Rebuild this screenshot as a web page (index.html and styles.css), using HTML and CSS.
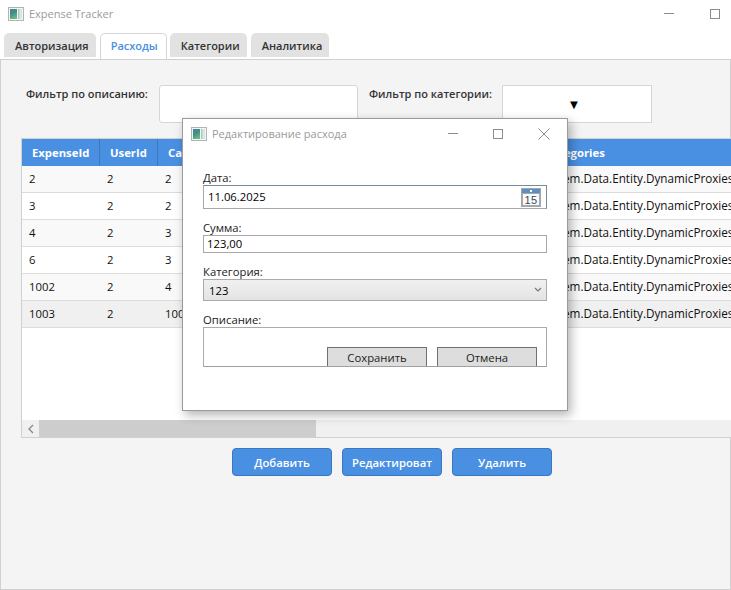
FILE: index.html
```html
<!DOCTYPE html>
<html lang="en">
<head>
    <meta charset="UTF-8">
    <title>Expense Tracker</title>
    <link rel="stylesheet" href="styles.css">
</head>
<body>
    <svg class="defs" width="0" height="0"><defs><linearGradient id="appfill" x1="0" y1="0" x2="0.4" y2="1"><stop offset="0" stop-color="#4f7f9f"/><stop offset="0.5" stop-color="#3f8f8a"/><stop offset="1" stop-color="#6fb57f"/></linearGradient></defs></svg>
    <div class="titlebar">
        <svg class="appicon" viewBox="0 0 16 16"><rect x="0.5" y="1.5" width="15" height="13" fill="#f4f6f6" stroke="#b0b4b4"/><rect x="2" y="3" width="7" height="10" fill="url(#appfill)"/><rect x="10" y="3" width="1.5" height="10" fill="#9ecbb8"/><rect x="12" y="3" width="2" height="10" fill="#dbe4e4"/></svg>
        <span class="titletext">Expense Tracker</span>
        <div class="controls">
            <span class="min"></span>
            <span class="max"></span>
        </div>
    </div>
    <div class="tabs">
        <div class="tab">Авторизация</div>
        <div class="tab active">Расходы</div>
        <div class="tab">Категории</div>
        <div class="tab">Аналитика</div>
    </div>
    <div class="panel">
        <div class="filters">
            <label class="flabel one">Фильтр по описанию:</label>
            <div class="finput"></div>
            <label class="flabel two">Фильтр по категории:</label>
            <div class="fcombo">▼</div>
        </div>
        <div class="grid">
            <table>
                <tr>
                    <th class="c1">ExpenseId</th><th class="c2">UserId</th><th class="c3">CategoryId</th><th>Categories</th>
                </tr>
                <tr><td>2</td><td>2</td><td>2</td><td>System.Data.Entity.DynamicProxies</td></tr>
                <tr><td>3</td><td>2</td><td>2</td><td>System.Data.Entity.DynamicProxies</td></tr>
                <tr><td>4</td><td>2</td><td>3</td><td>System.Data.Entity.DynamicProxies</td></tr>
                <tr><td>6</td><td>2</td><td>3</td><td>System.Data.Entity.DynamicProxies</td></tr>
                <tr><td>1002</td><td>2</td><td>4</td><td>System.Data.Entity.DynamicProxies</td></tr>
                <tr class="selected"><td>1003</td><td>2</td><td>1002</td><td>System.Data.Entity.DynamicProxies</td></tr>
            </table>
            <div class="hscroll">
                <div class="arrow"><svg width="8" height="10" viewBox="0 0 8 10"><path d="M6 1 L2 5 L6 9" fill="none" stroke="#8a8a8a" stroke-width="1.4"/></svg></div>
                <div class="thumb"></div>
            </div>
        </div>
        <div class="actions">
            <button>Добавить</button>
            <button>Редактироват</button>
            <button>Удалить</button>
        </div>
    </div>

    <div class="dialog">
        <div class="dtitle">
            <svg class="appicon" viewBox="0 0 16 16"><rect x="0.5" y="1.5" width="15" height="13" fill="#f4f6f6" stroke="#b0b4b4"/><rect x="2" y="3" width="7" height="10" fill="url(#appfill)"/><rect x="10" y="3" width="1.5" height="10" fill="#9ecbb8"/><rect x="12" y="3" width="2" height="10" fill="#dbe4e4"/></svg>
            <span class="titletext">Редактирование расхода</span>
            <div class="dcontrols">
                <span class="min"></span>
                <span class="max"></span>
                <svg width="12" height="12" viewBox="0 0 12 12"><path d="M0.5 0.5 L11.5 11.5 M11.5 0.5 L0.5 11.5" stroke="#8c8c8c" fill="none"/></svg>
            </div>
        </div>
        <div class="form">
            <label>Дата:</label>
            <div class="dateinput">
                <span>11.06.2025</span>
                <svg width="20" height="19" viewBox="0 0 20 19"><rect width="20" height="19" fill="#a4a8ac"/><rect x="1" y="1" width="18" height="4" fill="#5a8fc4"/><rect x="9" y="2" width="2" height="2" fill="#fff"/><rect x="2" y="6" width="16" height="11" fill="#fbfbfb"/><text x="10" y="15.5" font-size="11" letter-spacing="0.5" text-anchor="middle" fill="#3c4a50" font-family="Liberation Sans">15</text></svg>
            </div>
            <label>Сумма:</label>
            <div class="textinput">123,00</div>
            <label>Категория:</label>
            <div class="combo">
                <span>123</span>
                <svg width="8" height="6" viewBox="0 0 8 6"><path d="M1 1 L4 4 L7 1" fill="none" stroke="#777" stroke-width="1.2"/></svg>
            </div>
            <label>Описание:</label>
            <div class="descr">
                <button>Сохранить</button>
                <button>Отмена</button>
            </div>
        </div>
    </div>
</body>
</html>
```
FILE: styles.css
```css
* {
    margin: 0; padding: 0;
    box-sizing: border-box;
}
html, body {
    width: 731px;
    height: 590px;
    overflow: hidden;
}
body {
    background: #fff;
    color: #000;
    font-family: "Open Sans", "Noto Sans", sans-serif;
    font-size: 11.3px;
    position: relative;
}
.defs {
    position: absolute;
}

.titlebar {
    height: 33px;
    display: flex;
    align-items: center;
    padding: 0 11px 6px 8px;
}
.appicon {
    width: 16px;
    height: 16px;
    flex: none;
}
.titletext {
    margin-left: 5px;
    color: #9a9a9a;
    font-size: 11px;
}
.controls {
    margin-left: auto;
    display: flex;
    align-items: center;
    gap: 36px;
}
.min {
    display: block;
    width: 10px;
    height: 1px;
    background: #8c8c8c;
}
.max {
    display: block;
    width: 10px;
    height: 10px;
    border: 1px solid #8c8c8c;
}

.tabs {
    height: 26px;
    display: flex;
    align-items: flex-start;
    padding-left: 4px;
    gap: 4px;
}
.tab {
    height: 24px;
    padding: 0 7px 0 11px;
    display: flex;
    align-items: center;
    background: #e2e2e2;
    border-radius: 5px 5px 0 0;
    font-size: 11px;
    font-weight: 600;
    color: #333;
}
.tab.active {
    height: 26px;
    background: #fff;
    border: 1px solid #d6d6d6;
    border-bottom: 0;
    color: #4a90e2;
    padding: 0 8px 2px 10px;
    margin-right: -1px;
}

.panel {
    height: 531px;
    background: #f4f4f4;
    border: 1px solid #d0d0d0;
    padding: 25px 0 0 20px;
}
.filters {
    display: flex;
    align-items: flex-start;
    height: 53px;
}
.flabel {
    font-weight: 600;
    font-size: 11px;
    color: #333;
    line-height: 18px;
    white-space: nowrap;
}
.flabel.one { width: 124px; margin: 0 9px 0 5px; }
.flabel.two { width: 123px; margin: 0 10px 0 11px; }
.finput {
    width: 199px;
    height: 38px;
    background: #fff;
    border: 1px solid #d6d6d6;
    border-radius: 3px;
}
.fcombo {
    width: 150px;
    height: 38px;
    background: #fff;
    border: 1px solid #d6d6d6;
    text-align: center;
    line-height: 36px;
    font-size: 13px;
    padding-right: 6px;
}

.grid {
    width: 710px;
    height: 300px;
    background: #fff;
    border-top: 1px solid #d0d0d0;
    border-left: 1px solid #d0d0d0;
    border-bottom: 1px solid #d0d0d0;
    display: flex;
    flex-direction: column;
    justify-content: space-between;
    overflow: hidden;
}
table {
    border-collapse: separate;
    border-spacing: 0;
    table-layout: fixed;
    width: 709px;
}
th {
    height: 27px;
    background: #4a90e2;
    color: #fff;
    font-weight: 700;
    text-align: left;
    padding: 0 7px 0 10px;
    white-space: nowrap;
    overflow: hidden;
    border-right: 1px solid #3a78c2;
}
th:last-child {
    border-right: 0;
    padding-left: 11px;
}
.c1 { width: 78px; }
.c2 { width: 58px; }
.c3 { width: 376px; }
td {
    height: 27px;
    padding: 0 7px 2px;
    border-bottom: 1px solid #dcdcdc;
    background: #fff;
    color: #111;
    white-space: nowrap;
    overflow: hidden;
}
td:last-child { font-size: 11.7px; }
tr:nth-child(even) td { background: #f9f9f9; }
tr.selected td { background: #f0f0f0; }

.hscroll {
    height: 17px;
    background: #f0f0f0;
    display: flex;
}
.arrow {
    width: 17px;
    display: flex;
    align-items: center;
    justify-content: center;
}
.thumb {
    width: 277px;
    background: #cdcdcd;
}

.actions {
    display: flex;
    gap: 10px;
    margin: 10px 0 0 211px;
}
.actions button {
    width: 100px;
    height: 28px;
    background: #4a90e2;
    border: 1px solid #3a78c2;
    border-radius: 4px;
    color: #fff;
    font: 600 11.3px "Open Sans", "Noto Sans", sans-serif;
}

.dialog {
    position: absolute;
    left: 182px;
    top: 118px;
    width: 386px;
    height: 293px;
    background: #fff;
    border: 1px solid #9a9a9a;
    box-shadow: 3px 4px 10px rgba(0,0,0,0.3);
}
.dtitle {
    height: 29px;
    display: flex;
    align-items: center;
    padding: 0 17px 0 8px;
}
.dcontrols {
    margin-left: auto;
    display: flex;
    align-items: center;
    gap: 35px;
}
.form {
    padding: 21px 20px 0 20px;
}
.form label {
    display: block;
    height: 16px;
    line-height: 18px;
    color: #222;
}
.dateinput {
    height: 24px;
    border: 1px solid #7a8a96;
    border-bottom-color: #a8a8a8;
    border-left-color: #a8a8a8;
    display: flex;
    align-items: center;
    justify-content: space-between;
    padding: 0 5px 0 4px;
    margin-bottom: 10px;
}
.dateinput span {
    padding-bottom: 2px;
}
.textinput {
    height: 18px;
    border: 1px solid #a8a8a8;
    padding: 0 3px;
    line-height: 16px;
    margin-bottom: 10px;
}
.combo {
    height: 22px;
    border: 1px solid #ababab;
    background: linear-gradient(#f0f0f0, #e4e4e4);
    display: flex;
    align-items: center;
    justify-content: space-between;
    padding: 0 4px 0 5px;
    margin-bottom: 10px;
}
.descr {
    height: 40px;
    border: 1px solid #ababab;
    border-bottom-color: #a0a0a0;
    display: flex;
    justify-content: flex-end;
    align-items: flex-start;
    gap: 10px;
    padding: 19px 9px 0 0;
    overflow: hidden;
}
.descr button {
    flex: none;
    width: 100px;
    height: 24px;
    background: #dddddd;
    border: 1px solid #707070;
    color: #222;
    padding-bottom: 3px;
    font: 11.3px "Open Sans", "Noto Sans", sans-serif;
}
```
